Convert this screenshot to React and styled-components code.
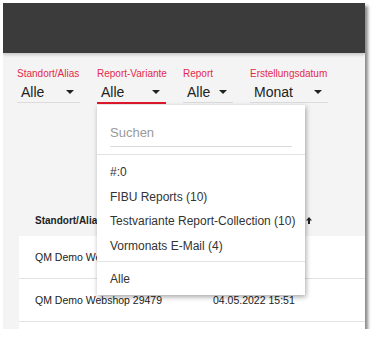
import React from "react";
import styled, { createGlobalStyle } from "styled-components";

const GlobalStyle = createGlobalStyle`
  body {
    margin: 0;
    background: #ffffff;
    font-family: "Liberation Sans", Arial, sans-serif;
  }
`;

const Frame = styled.div`
  margin: 3px 0 0 3px;
  width: 362px;
  height: 326px;
  background: #f4f4f4;
  box-shadow: 3px 3px 3px rgba(0, 0, 0, 0.45);
  overflow: hidden;
  display: flex;
  flex-direction: column;
`;

const Header = styled.header`
  height: 50px;
  flex: none;
  background: #3b3b3b;
  box-shadow: 0 2px 3px rgba(0, 0, 0, 0.18);
  position: relative;
  z-index: 1;
`;

const Filters = styled.div`
  display: flex;
  gap: 17px;
  padding: 15px 0 0 14px;
`;

const Filter = styled.div`
  position: relative;
  display: flex;
  flex-direction: column;
  width: ${(p) => p.width}px;
`;

const Label = styled.span`
  font-size: 10px;
  line-height: 12px;
  color: #e42a4c;
  white-space: nowrap;
`;

const Select = styled.div`
  margin-top: 2px;
  height: 20px;
  display: flex;
  align-items: center;
  justify-content: space-between;
  padding: 0 6px 0 4px;
  font-size: 14px;
  color: #222;
  border-bottom: ${(p) => (p.active ? "2px solid #e0182d" : "1px solid #dcdcdc")};
`;

const Caret = styled.span`
  width: 0;
  height: 0;
  border-left: 4px solid transparent;
  border-right: 4px solid transparent;
  border-top: 4px solid #222;
`;

const Menu = styled.div`
  position: absolute;
  top: 37px;
  left: 0;
  width: 208px;
  background: #ffffff;
  box-shadow: 1px 2px 5px rgba(0, 0, 0, 0.35);
  z-index: 5;
  padding-top: 20px;
`;

const Search = styled.div`
  margin: 0 13px;
  padding-bottom: 6px;
  font-size: 13px;
  color: #9a9a9a;
  border-bottom: 1px solid #dcdcdc;
`;

const Divider = styled.div`
  height: 1px;
  background: #e3e3e3;
  margin-top: ${(p) => p.top || 0}px;
`;

const MenuList = styled.div`
  padding: 5px 0 3px;
`;

const MenuItem = styled.div`
  height: 24.5px;
  line-height: 24.5px;
  padding-left: 13px;
  font-size: 12px;
  color: #333;
  white-space: nowrap;
`;

const Table = styled.div`
  margin: 100px 0 0 16px;
`;

const HeadRow = styled.div`
  display: flex;
  align-items: center;
  height: 32px;
  padding-left: 16px;
  font-size: 10px;
  font-weight: 700;
  color: #222;
`;

const Row = styled.div`
  display: flex;
  align-items: center;
  height: 42px;
  padding-left: 16px;
  background: #ffffff;
  border-bottom: 1px solid #e2e2e2;
  font-size: 10.5px;
  color: #222;
`;

const Cell = styled.div`
  flex: none;
  width: 178px;
  white-space: nowrap;
  display: flex;
  align-items: center;
  padding-left: ${(p) => p.indent || 0}px;
`;

const SortArrow = () => (
  <svg width="6" height="7" viewBox="0 0 6 7">
    <path d="M3 0 L6 3.5 L4 3.5 L4 7 L2 7 L2 3.5 L0 3.5 Z" fill="#222" />
  </svg>
);

const filters = [
  { label: "Standort/Alias", value: "Alle", width: 63 },
  { label: "Report-Variante", value: "Alle", width: 69, active: true },
  { label: "Report", value: "Alle", width: 50 },
  { label: "Erstellungsdatum", value: "Monat", width: 78 },
];

const options = [
  "#:0",
  "FIBU Reports (10)",
  "Testvariante Report-Collection (10)",
  "Vormonats E-Mail (4)",
];

export default function App() {
  return (
    <>
      <GlobalStyle />
      <Frame>
        <Header />
        <Filters>
          {filters.map((f) => (
            <Filter key={f.label} width={f.width}>
              <Label>{f.label}</Label>
              <Select active={f.active}>
                <span>{f.value}</span>
                <Caret />
              </Select>
              {f.active && (
                <Menu>
                  <Search>Suchen</Search>
                  <Divider top={7} />
                  <MenuList>
                    {options.map((o) => (
                      <MenuItem key={o}>{o}</MenuItem>
                    ))}
                  </MenuList>
                  <Divider />
                  <MenuList>
                    <MenuItem>Alle</MenuItem>
                  </MenuList>
                </Menu>
              )}
            </Filter>
          ))}
        </Filters>
        <Table>
          <HeadRow>
            <Cell>Standort/Alias</Cell>
            <Cell indent={93}>
              <SortArrow />
            </Cell>
          </HeadRow>
          <Row>
            <Cell>QM Demo Webshop 29478</Cell>
            <Cell>04.05.2022 15:52</Cell>
          </Row>
          <Row>
            <Cell>QM Demo Webshop 29479</Cell>
            <Cell>04.05.2022 15:51</Cell>
          </Row>
          <Row />
        </Table>
      </Frame>
    </>
  );
}
